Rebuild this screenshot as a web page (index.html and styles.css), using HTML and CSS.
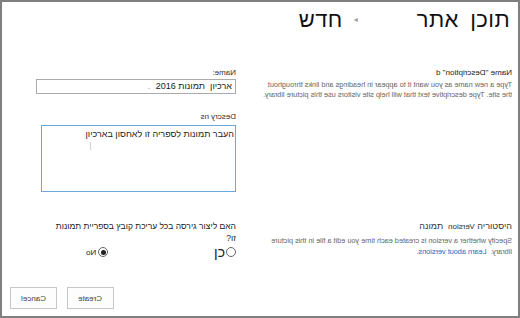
FILE: index.html
```html
<!DOCTYPE html>
<html lang="he" dir="rtl">
<head>
  <meta charset="UTF-8" />
  <title>תוכן אתר - חדש</title>
  <link rel="stylesheet" href="styles.css">
</head>
<body>
<div class="page">

  <header class="title">
    <span class="crumb">תוכן אתר</span>
    <span class="crumb-arrow">◂</span>
    <span class="crumb">חדש</span>
  </header>

  <section class="row row-name">
    <div class="info">
      <div class="info-title mirror-block">Name "Description" d</div>
      <p class="info-desc mirror-block">Type a new name as you want it to appear in headings and links throughout<br>the site. Type descriptive text that will help site visitors use this picture library.</p>
    </div>
    <div class="field">
      <div class="field-label mirror-block">Name:</div>
      <div class="textbox">ארכיון &nbsp;תמונות 2016 <span class="dot">.</span></div>
      <div class="field-label label-desc mirror-block">Descry ns</div>
      <div class="textarea">
        העבר תמונות לספריה זו לאחסון בארכיון
        <span class="ibeam"></span>
      </div>
    </div>
  </section>

  <section class="row row-version">
    <div class="info">
      <div class="info-title">היסטוריה <span class="mirror">Version</span> &nbsp;תמונה</div>
      <p class="info-desc mirror-block">Specify whether a version is created each time you edit a file in this picture<br>library. &nbsp;<a href="#">Learn about versions.</a></p>
    </div>
    <div class="field">
      <div class="question">האם ליצור גירסה בכל עריכת קובץ בספריית תמונות<br>זו?</div>
      <div class="radios">
        <label class="option"><span class="radio"></span><span class="opt-yes">כן</span></label>
        <label class="option"><span class="radio checked"></span><span class="mirror opt-no">No</span></label>
      </div>
    </div>
  </section>

  <footer class="actions">
    <button class="btn"><span class="mirror">Create</span></button>
    <button class="btn"><span class="mirror">Cancel</span></button>
  </footer>

</div>
</body>
</html>
```

FILE: styles.css
```css
html, body { margin: 0; padding: 0; }
body { font-family: "Liberation Sans", "DejaVu Sans", Arial, sans-serif; color: #222; background: #fff; }
.page { box-sizing: border-box; width: 520px; height: 318px; border: 2px solid #7f7f7f; padding: 5px 6px 7px 8px; display: flex; flex-direction: column; }

/* mirrored english text */
.mirror { display: inline-block; transform: scaleX(-1); direction: ltr; }
.mirror-block { transform: scaleX(-1); direction: ltr; text-align: left; }

/* breadcrumb title */
.title { display: flex; align-items: center; font-size: 22px; line-height: 26px; color: #111; padding-right: 2px; letter-spacing: 0.4px; word-spacing: 5px; }
.crumb-arrow { font-size: 8px; color: #a0a0a0; margin: 0 59px 0 11px; letter-spacing: 0; }

/* rows */
.row { display: flex; gap: 22px; }
.row-name { margin-top: 33px; }
.row-version { margin-top: 27px; }
.info { width: 254px; flex: none; }
.info-title { font-size: 8px; line-height: 14px; color: #222; }
.info-desc { margin: 0; font-size: 7.3px; line-height: 10px; color: #666; white-space: nowrap; }
.info-desc a { color: #0b6fc2; text-decoration: none; }
.row-version .info-title { font-size: 9px; color: #333; }
.row-version .info-title .mirror { font-size: 8px; }
.row-version .info-desc { line-height: 11px; margin-top: 1px; }

.field { width: 200px; flex: none; padding-top: 1px; }
.field-label { font-size: 8px; line-height: 12px; color: #333; }
.label-desc { margin-top: 17px; line-height: 12px; }
.textbox { box-sizing: border-box; height: 15px; border: 1px solid #ababab; font-size: 9px; line-height: 13px; padding: 0 3px; text-align: right; }
.textbox .dot { color: #999; margin-right: 3px; }
.textarea { position: relative; box-sizing: border-box; width: 195px; height: 67px; margin-top: 2px; margin-left: auto; border: 1px solid #6ea7de; font-size: 9px; line-height: 12px; padding: 2px 1px; text-align: right; }
.ibeam { position: absolute; left: 48px; top: 16px; width: 1px; height: 8px; background: #d0d0d0; }

.question { font-size: 8.5px; line-height: 12px; color: #222; }
.radios { display: flex; gap: 106px; height: 14px; align-items: center; margin-top: 1px; }
.option { display: flex; align-items: center; gap: 1px; }
.radio { box-sizing: border-box; width: 10px; height: 10px; border: 1px solid #666; border-radius: 50%; display: flex; align-items: center; justify-content: center; }
.radio.checked::after { content: ""; width: 5px; height: 5px; border-radius: 50%; background: #222; }
.opt-yes { font-size: 14px; line-height: 14px; }
.opt-no { font-size: 8px; margin-right: 1px; }

/* buttons */
.actions { margin-top: auto; display: flex; justify-content: flex-end; gap: 10px; }
.btn { box-sizing: border-box; width: 47px; height: 22px; padding: 0; border: 1px solid #c6c6c6; background: #fdfdfd; color: #444; font-family: inherit; font-size: 8px; cursor: pointer; }
```
